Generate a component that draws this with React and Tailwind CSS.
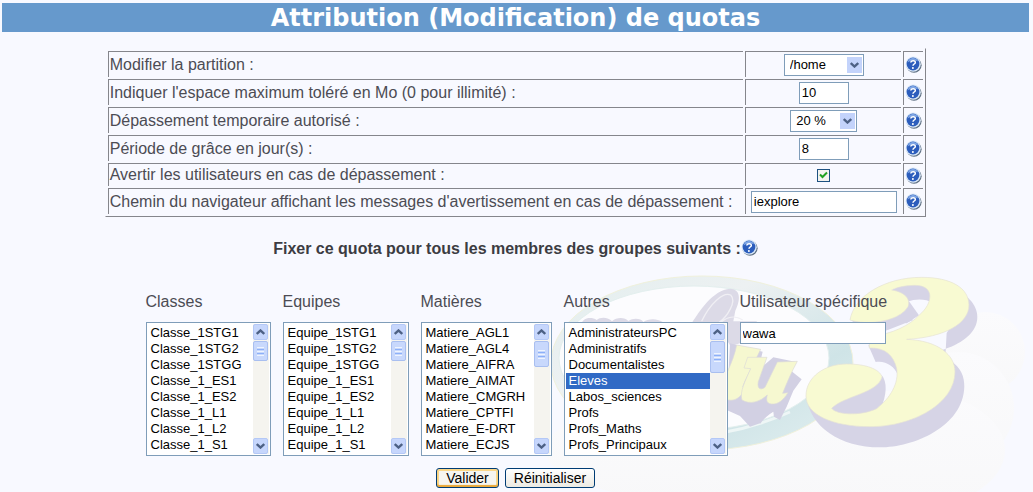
import React, { useState } from 'react';

const groupes = [
    {
        id: 'classes',
        label: 'Classes',
        width: 'w-[125px]',
        thumb: 'h-5',
        items: ['Classe_1STG1', 'Classe_1STG2', 'Classe_1STGG', 'Classe_1_ES1', 'Classe_1_ES2', 'Classe_1_L1', 'Classe_1_L2', 'Classe_1_S1'],
    },
    {
        id: 'equipes',
        label: 'Equipes',
        width: 'w-[126px]',
        thumb: 'h-5',
        items: ['Equipe_1STG1', 'Equipe_1STG2', 'Equipe_1STGG', 'Equipe_1_ES1', 'Equipe_1_ES2', 'Equipe_1_L1', 'Equipe_1_L2', 'Equipe_1_S1'],
    },
    {
        id: 'matieres',
        label: 'Matières',
        width: 'w-[131px]',
        thumb: 'h-[26px]',
        items: ['Matiere_AGL1', 'Matiere_AGL4', 'Matiere_AIFRA', 'Matiere_AIMAT', 'Matiere_CMGRH', 'Matiere_CPTFI', 'Matiere_E-DRT', 'Matiere_ECJS'],
    },
    {
        id: 'autres',
        label: 'Autres',
        width: 'w-[164px]',
        thumb: 'h-8',
        selected: ['Eleves'],
        items: ['AdministrateursPC', 'Administratifs', 'Documentalistes', 'Eleves', 'Labos_sciences', 'Profs', 'Profs_Maths', 'Profs_Principaux'],
    },
];

const field = 'h-[22px] border border-[#7f9db9] bg-white text-[13px] text-black outline-none';

const HelpButton = () => (
    <button type="button" aria-label="Aide" className="block size-[17px] shrink-0">
        <svg viewBox="0 0 17 17" className="size-[17px]">
            <circle cx="9" cy="9.2" r="7.6" fill="#5d6f82" />
            <circle cx="8.2" cy="8.2" r="7.6" fill="#dbe9f8" />
            <circle cx="8" cy="8" r="6.4" fill="#2c5dbc" />
            <path d="M2.600 6.400a5.500 5.500 0 0 1 10.400-1.200C10 4 6 4.300 2.600 6.400z" fill="#7fa6e4" />
            <path d="M5.800 6.500C6 4.300 10.600 4 10.300 6.600 10.100 8 8.100 8.100 8 9.700" fill="none" stroke="#fff" strokeWidth="1.5" />
            <circle cx="7.900" cy="11.900" r="1" fill="#fff" />
        </svg>
    </button>
);

const Chevron = ({ up }) => (
    <svg viewBox="0 0 9 6" className="h-1.5 w-[9px]">
        <path d={up ? 'M.8 5L4.500 1.500L8.200 5' : 'M.8 1L4.500 4.500L8.200 1'} fill="none" stroke="#4d6185" strokeWidth="2.4" />
    </svg>
);

const ScrollButton = ({ up }) => (
    <span className="flex h-4 w-[15px] items-center justify-center rounded-xs border border-[#b4c8f6] bg-[#c6d6fc]">
        <Chevron up={up} />
    </span>
);

const Dropdown = ({ id, width, options }) => (
    <span className="relative inline-block align-top">
        <select id={id} className={`${field} ${width} block appearance-none pl-[5px] text-sm leading-4`}>
            {options.map((o) => (
                <option key={o}>{o}</option>
            ))}
        </select>
        <span className="pointer-events-none absolute top-[3px] right-[2px] flex h-4 w-[15px] items-center justify-center bg-[#c3d3fb]">
            <Chevron />
        </span>
    </span>
);

const GroupList = ({ groupe }) => (
    <div className={`${groupe.width} shrink-0`}>
        <label htmlFor={groupe.id} className="block">{groupe.label}</label>
        <div className="mt-[11px] flex h-[134px] border border-[#7f9db9] bg-white p-px">
            <select
                id={groupe.id}
                multiple
                size={8}
                defaultValue={groupe.selected || []}
                className="h-[130px] min-w-0 flex-1 overflow-hidden border-0 bg-white px-0 py-px text-[13px] text-black outline-none"
            >
                {groupe.items.map((item) => (
                    <option
                        key={item}
                        className="h-4 min-h-0 p-0 pl-[3px] leading-4 checked:bg-[#316ac5] checked:bg-[linear-gradient(#316ac5,#316ac5)] checked:text-white!"
                    >
                        {item}
                    </option>
                ))}
            </select>
            <div aria-hidden="true" className="flex w-4 flex-col items-center bg-[#f5f4ef]">
                <ScrollButton up />
                <span className={`${groupe.thumb} mt-px flex w-[15px] flex-col items-center justify-center gap-px rounded-xs border border-[#a9bff0] bg-[#c8d8fc]`}>
                    <i className="h-px w-[7px] bg-[#eef4fe]" />
                    <i className="h-px w-[7px] bg-[#8cb0f8]" />
                    <i className="h-px w-[7px] bg-[#eef4fe]" />
                    <i className="h-px w-[7px] bg-[#8cb0f8]" />
                    <i className="h-px w-[7px] bg-[#eef4fe]" />
                </span>
                <span className="flex-1" />
                <ScrollButton />
            </div>
        </div>
    </div>
);

const Row = ({ id, label, height, children }) => (
    <tr className={height}>
        <td className="border-t border-l border-[#85868c] p-0 pl-px">
            <label htmlFor={id}>{label}</label>
        </td>
        <td className="w-[156px] border-t border-l border-[#85868c] p-0">
            <div className="flex justify-center">{children}</div>
        </td>
        <td className="w-5 border-t border-l border-[#85868c] p-0 pl-px">
            <HelpButton />
        </td>
    </tr>
);

// pale logo behind the form
const Watermark = () => (
    <svg viewBox="480 260 553 232" aria-hidden="true" className="pointer-events-none absolute top-[260px] right-0 -z-10 h-[232px] w-[553px]">
        <defs>
            <linearGradient id="ring" x1="0" y1="0" x2="1" y2="1">
                <stop offset="0" stopColor="#e2eeee" />
                <stop offset="0.35" stopColor="#edf1f2" />
                <stop offset="0.7" stopColor="#cfe4e7" />
                <stop offset="1" stopColor="#e3f0f1" />
            </linearGradient>
            <linearGradient id="cloud" x1="0" y1="0" x2="0" y2="1">
                <stop offset="0" stopColor="#fbfbfd" />
                <stop offset="1" stopColor="#f8f8f9" />
            </linearGradient>
        </defs>
        <g fill="url(#cloud)">
            <circle cx="985" cy="352" r="40" />
            <circle cx="958" cy="408" r="56" />
            <ellipse cx="905" cy="450" rx="100" ry="60" />
            <ellipse cx="735" cy="450" rx="190" ry="55" />
        </g>
        <ellipse cx="702" cy="363" rx="151" ry="87" fill="url(#ring)" stroke="#f0f1dc" />
        <ellipse cx="694" cy="358" rx="135" ry="72" fill="#fcfcfe" stroke="#e3efee" />
        <path d="M578 390C600 442 700 452 790 412" fill="none" stroke="#eef6f6" strokeWidth="3" />
        <g transform="translate(630 260) scale(.3333)">
            <g fill="#dcdae7">
                <path d="M-145 190c5-17 30-20 45-10 12-10 36-8 46 4 14-14 40-12 49-1 15-10 38-8 45 3 15-10 40-11 58 0l-2 44h-240z" />
                <path d="M185 190C210 150 250 90 300 86c32 1 33 32 16 66l-6 32h72l-35 25 15 30-60 20-28-45-45 12z" />
            </g>
            <path d="M215 184C240 130 280 95 302 105c20 20-12 66-34 82M270 190c20-20 45-25 68-10" fill="none" stroke="#f0eff4" strokeWidth="4" />
            <path d="M300 250L398 275 385 330 430 292 495 305 480 330 515 358 490 392 470 440 450 480 432 470 430 455C405 468 385 500 390 490L360 500 330 468 290 450z" fill="#d2d0e3" />
            <g fill="#f6f8d0" stroke="#dddbd8" strokeWidth="2">
                <path d="M320 255L392 268C372 310 350 350 338 380L350 374C340 405 320 425 295 420L270 400C280 350 310 310 320 255z" />
                <path d="M353 292L411 292 385 365C381 385 390 392 405 382L442 306 502 304C485 335 470 370 458 400L474 398C460 420 445 434 424 432 406 430 410 414 412 405 390 425 360 435 336 420 328 395 347 360 362 326L342 324z" />
            </g>
            <g fill="#d6d4e6">
                <path d="M1010 110C1060 150 1065 232 930 272L960 300C995 325 1003 350 1003 380 1000 500 850 562 750 562 630 562 540 500 529 410L700 480 940 400 950 220z" />
                <path d="M660 175L685 205C700 218 730 222 760 215L850 180 800 150z" />
                <path d="M784 92C815 65 925 60 912 130 880 112 850 120 836 124z" />
                <path d="M836 122L867 166 830 190 790 185z" />
                <path d="M755 345C772 365 772 405 750 450 700 480 620 470 604 445 610 420 700 405 755 355z" />
                <path d="M715 256L737 306C765 300 795 320 802 342L820 280z" />
            </g>
            <path
                d="M660 180C672 108 765 52 875 52 965 52 1017 85 1017 135 1017 190 945 232 830 238 925 242 975 285 975 335 975 430 850 500 720 500 610 500 528 465 528 408 528 350 585 312 650 312 710 312 748 328 756 350 745 400 640 408 605 445 620 466 695 468 740 446 780 415 808 370 800 325 790 285 765 262 718 264L718 230C790 222 840 195 868 165 910 130 915 76 855 76 820 76 790 86 785 90 825 96 843 118 834 140 805 188 705 196 660 180z"
                fill="#f8fad2"
                stroke="#e6e3d5"
                strokeWidth="2"
            />
        </g>
    </svg>
);

const App = () => {
    const [avertir, setAvertir] = useState(true);

    return (
        <div className="relative isolate min-h-screen overflow-hidden bg-[#f8f9ff] pt-[3px] pr-1 pl-0.5 font-['Liberation_Sans',Arial,sans-serif] text-base leading-[18px] text-[#4c4c54]">
            <Watermark />
            <h1 className="bg-[#6699cc] pt-0.5 text-center font-['DejaVu_Sans',Verdana,sans-serif] text-2xl leading-[27px] font-bold text-white">
                Attribution (Modification) de quotas
            </h1>

            <form onSubmit={(e) => e.preventDefault()}>
                <table className="mx-auto mt-4 w-4/5 border-separate border-spacing-[2px] border border-t-transparent border-r-[#85868c] border-b-[#85868c] border-l-transparent">
                    <tbody>
                        <Row id="partition" label="Modifier la partition :" height="h-[26px]">
                            <Dropdown id="partition" width="w-20" options={['/home']} />
                        </Row>
                        <Row id="espace" label="Indiquer l'espace maximum toléré en Mo (0 pour illimité) :" height="h-[26px]">
                            <input id="espace" type="text" defaultValue="10" className={`${field} w-[50px] px-0.5`} />
                        </Row>
                        <Row id="depassement" label="Dépassement temporaire autorisé :" height="h-[26px]">
                            <Dropdown id="depassement" width="w-[67px]" options={['20 %']} />
                        </Row>
                        <Row id="grace" label="Période de grâce en jour(s) :" height="h-[26px]">
                            <input id="grace" type="text" defaultValue="8" className={`${field} w-[50px] px-0.5`} />
                        </Row>
                        <Row id="avertir" label="Avertir les utilisateurs en cas de dépassement :" height="h-[23px]">
                            <span className="relative block size-[13px]">
                                <input
                                    id="avertir"
                                    type="checkbox"
                                    checked={avertir}
                                    onChange={(e) => setAvertir(e.target.checked)}
                                    className="block size-[13px] appearance-none border border-[#1d5281] bg-[#f3f3ef]"
                                />
                                {avertir && (
                                    <svg viewBox="0 0 13 13" className="pointer-events-none absolute inset-0 size-[13px]">
                                        <path d="M3 5.500L5.500 8L10 3.500" fill="none" stroke="#21a121" strokeWidth="2" />
                                    </svg>
                                )}
                            </span>
                        </Row>
                        <Row id="navigateur" label="Chemin du navigateur affichant les messages d'avertissement en cas de dépassement :" height="h-[26px]">
                            <input id="navigateur" type="text" defaultValue="iexplore" className={`${field} w-[146px] px-0.5`} />
                        </Row>
                    </tbody>
                </table>

                <div className="mt-[22px] flex items-start justify-center">
                    <h2 className="leading-5 font-bold text-[#3c3c42]">Fixer ce quota pour tous les membres des groupes suivants :</h2>
                    <HelpButton />
                </div>

                <div className="mt-[34px] flex items-start justify-center gap-3">
                    {groupes.map((groupe) => (
                        <GroupList key={groupe.id} groupe={groupe} />
                    ))}
                    <div className="w-[146px] shrink-0">
                        <label htmlFor="utilisateur" className="block whitespace-nowrap">Utilisateur spécifique</label>
                        <input id="utilisateur" type="text" defaultValue="wawa" className={`${field} mt-[11px] block w-full px-0.5`} />
                    </div>
                </div>

                <div className="mt-3 flex justify-center gap-1.5">
                    <button type="submit" className="h-5 w-[63px] rounded-[3px] border border-[#003c74] bg-[#f6f5f0] text-sm leading-4 text-black shadow-[inset_0_-2px_1px_#e8a83a,inset_0_0_0_2px_#fbd88a]">
                        Valider
                    </button>
                    <button type="reset" className="h-5 w-[90px] rounded-[3px] border border-[#003c74] bg-linear-to-b from-white to-[#eceae3] text-sm leading-4 text-black">
                        Réinitialiser
                    </button>
                </div>
            </form>
        </div>
    );
};

export default App;
